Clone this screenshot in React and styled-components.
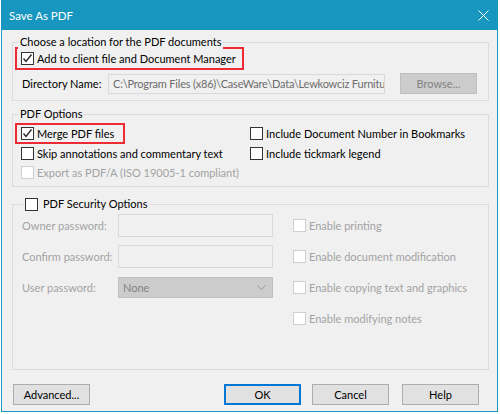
import React from 'react';
import styled, { createGlobalStyle } from 'styled-components';

const GlobalStyle = createGlobalStyle`
  html, body {
    margin: 0;
    padding: 0;
    background: #ffffff;
  }
  body {
    font-family: Lato, 'Noto Sans', sans-serif;
    font-size: 11px;
    color: #000;
  }
`;

const Window = styled.div`
  box-sizing: border-box;
  width: 497px;
  height: 412px;
  margin-left: 1px;
  border: 1px solid #1a9bc4;
  border-top: none;
  background: #f0f0f0;
  display: flex;
  flex-direction: column;
`;

const TitleBar = styled.div`
  height: 30px;
  margin: 0 -1px;
  background: #1797c0;
  color: #fff;
  display: flex;
  align-items: center;
  justify-content: space-between;
  padding: 0 9px 0 8px;
  font-size: 11.5px;
`;

const Body = styled.div`
  flex: 1;
  padding: 12px 8px 0 10px;
  display: flex;
  flex-direction: column;
`;

const Group = styled.div`
  position: relative;
  box-sizing: border-box;
  height: ${p => p.$h}px;
  margin-bottom: ${p => p.$mb || 0}px;
  border: 1px solid #dcdcdc;
  padding-top: ${p => p.$pt}px;
`;

const Legend = styled.div`
  position: absolute;
  top: -9px;
  left: ${p => p.$left || 5}px;
  padding: 0 2px;
  background: #f0f0f0;
  line-height: 16px;
  display: flex;
  align-items: center;
  gap: 2px;
`;

const Highlight = styled.div`
  box-sizing: border-box;
  display: inline-flex;
  align-items: center;
  height: ${p => p.$h}px;
  margin-left: ${p => (p.$ml === undefined ? 2 : p.$ml)}px;
  border: 2px solid #ec2b35;
  padding: 0 ${p => p.$pr || 9}px 0 4px;
  align-self: flex-start;
`;

const Box = styled.span`
  box-sizing: border-box;
  width: 13px;
  height: 13px;
  flex: none;
  border: 1px solid ${p => (p.$disabled ? '#cfcfcf' : '#333')};
  background: #fff;
  margin-right: 3px;
  display: inline-flex;
  align-items: center;
  justify-content: center;
`;

const CheckText = styled.span`
  color: ${p => (p.$disabled ? '#a3a3a3' : '#000')};
  white-space: nowrap;
`;

const Check = ({ checked, disabled, children }) => (
  <>
    <Box $disabled={disabled}>
      {checked && (
        <svg width="11" height="11" viewBox="0 0 11 11">
          <path d="M1.5 5.5 L4 8.5 L9.5 1.5" fill="none" stroke="#222" strokeWidth="1.3" />
        </svg>
      )}
    </Box>
    <CheckText $disabled={disabled}>{children}</CheckText>
  </>
);

const DirRow = styled.div`
  display: flex;
  align-items: center;
  margin-top: 3px;
  padding-left: 9px;
`;

const Label = styled.span`
  width: ${p => p.$w}px;
  flex: none;
  white-space: nowrap;
  color: ${p => (p.$disabled ? '#a3a3a3' : '#000')};
`;

const TextBox = styled.div`
  box-sizing: border-box;
  width: ${p => p.$w}px;
  height: ${p => p.$h}px;
  border: 1px solid #d9d9d9;
  background: #f0f0f0;
  color: #6d6d6d;
  padding: 0 1px 0 4px;
  letter-spacing: ${p => (p.$tight ? '-0.2px' : 'normal')};
  display: flex;
  align-items: center;
  white-space: nowrap;
  overflow: hidden;
`;

const Button = styled.div`
  box-sizing: border-box;
  width: 77px;
  height: 21px;
  flex: none;
  border: 1px solid ${p => (p.$primary ? '#0078d7' : p.$disabled ? '#bfbfbf' : '#adadad')};
  box-shadow: ${p => (p.$primary ? 'inset 0 0 0 1px #0078d7' : 'none')};
  background: ${p => (p.$disabled ? '#cccccc' : '#e1e1e1')};
  color: ${p => (p.$disabled ? '#838383' : '#000')};
  display: flex;
  align-items: center;
  justify-content: center;
`;

const Options = styled.div`
  display: grid;
  grid-template-columns: 235px 1fr;
  grid-template-rows: 21px 19px 18px;
  padding-left: 2px;
`;

const Cell = styled.div`
  display: flex;
  align-items: center;
  padding-left: ${p => p.$pl || 0}px;
`;

const SecurityGrid = styled.div`
  display: grid;
  grid-template-columns: 96px 175px 1fr;
  grid-auto-rows: 31px;
  padding-left: 9px;
`;

const Select = styled.div`
  box-sizing: border-box;
  width: 155px;
  height: 21px;
  border: 1px solid #bfbfbf;
  background: #cccccc;
  color: #838383;
  display: flex;
  align-items: center;
  justify-content: space-between;
  padding: 0 6px 0 4px;
`;

const Footer = styled.div`
  display: flex;
  align-items: center;
  margin-top: 14px;
  padding-left: 1px;
  padding-right: 10px;
`;

const Spacer = styled.div`
  flex: 1;
`;

const ButtonGap = styled.div`
  width: ${p => p.$w}px;
`;

export default function App() {
  return (
    <>
      <GlobalStyle />
      <Window>
        <TitleBar>
          <span>Save As PDF</span>
          <svg width="11" height="11" viewBox="0 0 11 11">
            <path d="M0.5 0.5 L10.5 10.5 M10.5 0.5 L0.5 10.5" stroke="#fff" strokeWidth="1" />
          </svg>
        </TitleBar>
        <Body>
          <Group $h={59} $mb={13} $pt={4}>
            <Legend>Choose a location for the PDF documents</Legend>
            <Highlight $h={23} $pr={6}>
              <Check checked>Add to client file and Document Manager</Check>
            </Highlight>
            <DirRow>
              <Label $w={86}>Directory Name:</Label>
              <TextBox $w={277} $h={20} $tight>C:\Program Files (x86)\CaseWare\Data\Lewkowciz Furnitu</TextBox>
              <ButtonGap $w={15} />
              <Button $disabled>Browse...</Button>
            </DirRow>
          </Group>

          <Group $h={73} $mb={17} $pt={8}>
            <Legend>PDF Options</Legend>
            <Options>
              <Cell>
                <Highlight $h={21} $ml={0}>
                  <Check checked>Merge PDF files</Check>
                </Highlight>
              </Cell>
              <Cell>
                <Check>Include Document Number in Bookmarks</Check>
              </Cell>
              <Cell $pl={6}>
                <Check>Skip annotations and commentary text</Check>
              </Cell>
              <Cell>
                <Check>Include tickmark legend</Check>
              </Cell>
              <Cell $pl={6}>
                <Check disabled>Export as PDF/A (ISO 19005-1 compliant)</Check>
              </Cell>
            </Options>
          </Group>

          <Group $h={166} $pt={5}>
            <Legend $left={10}>
              <Check>PDF Security Options</Check>
            </Legend>
            <SecurityGrid>
              <Cell><Label $disabled>Owner password:</Label></Cell>
              <Cell><TextBox $w={155} $h={23} /></Cell>
              <Cell><Check disabled>Enable printing</Check></Cell>

              <Cell><Label $disabled>Confirm password:</Label></Cell>
              <Cell><TextBox $w={155} $h={23} /></Cell>
              <Cell><Check disabled>Enable document modification</Check></Cell>

              <Cell><Label $disabled>User password:</Label></Cell>
              <Cell>
                <Select>
                  <span>None</span>
                  <svg width="9" height="5" viewBox="0 0 9 5">
                    <path d="M0.5 0.5 L4.5 4.5 L8.5 0.5" fill="none" stroke="#9a9a9a" strokeWidth="1" />
                  </svg>
                </Select>
              </Cell>
              <Cell><Check disabled>Enable copying text and graphics</Check></Cell>

              <Cell />
              <Cell />
              <Cell><Check disabled>Enable modifying notes</Check></Cell>
            </SecurityGrid>
          </Group>

          <Footer>
            <Button>Advanced...</Button>
            <Spacer />
            <Button $primary>OK</Button>
            <ButtonGap $w={11} />
            <Button>Cancel</Button>
            <ButtonGap $w={13} />
            <Button>Help</Button>
          </Footer>
        </Body>
      </Window>
    </>
  );
}
